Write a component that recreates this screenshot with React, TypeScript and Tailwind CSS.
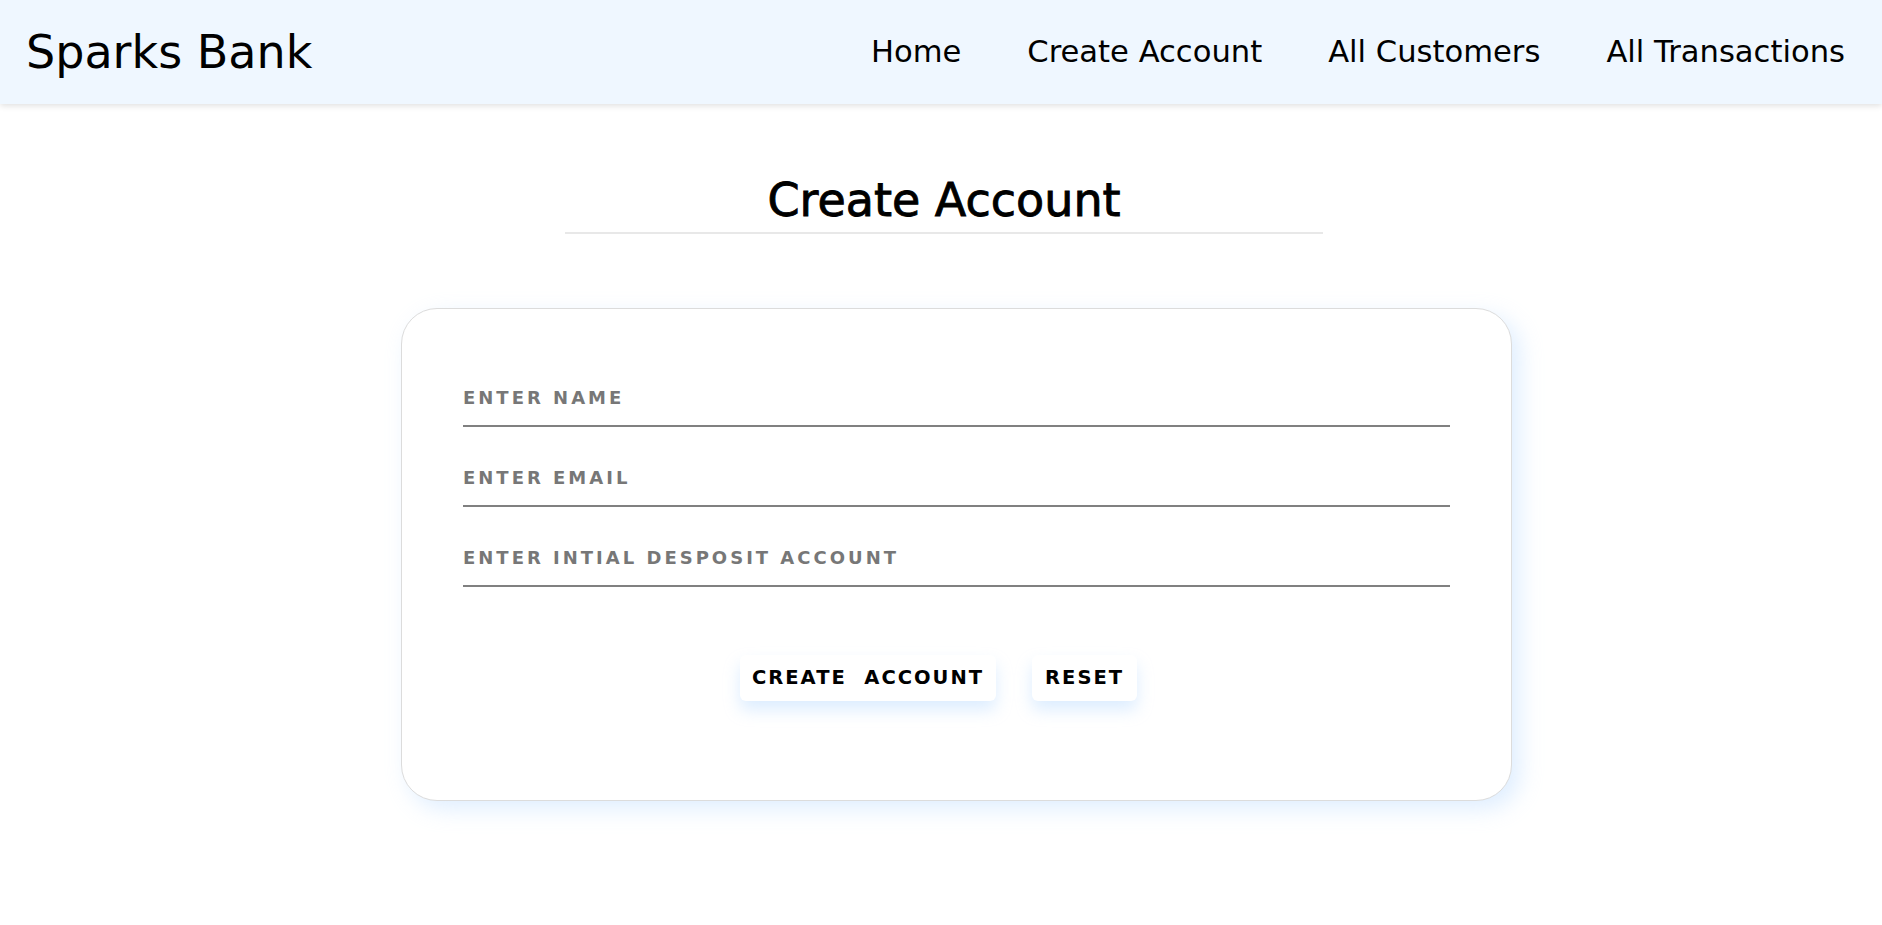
const links = ["Home", "Create Account", "All Customers", "All Transactions"];

const fields = ["Enter Name", "Enter Email", "Enter Intial Desposit Account"];

const Navbar = () => {
  return (
    <nav className="flex h-[104px] items-center justify-between bg-[#eff7ff] pl-[26px] pr-[37px] shadow-[0_2px_6px_rgba(0,0,0,0.12)]">
      <div className="text-[46px] leading-none text-black">Sparks Bank</div>
      <div className="flex items-center gap-[66px]">
        {links.map((link) => (
          <a key={link} href="#" className="text-[30.6px] leading-none text-black">
            {link}
          </a>
        ))}
      </div>
    </nav>
  );
};

const App = () => {
  return (
    <div className="min-h-[925px] bg-white font-['DejaVu_Sans',sans-serif]">
      <Navbar />
      <div className="mt-[73px] flex justify-center pl-[6px]">
        <div className="w-[758px] border-b-2 border-[#e8e8e8] pb-[9px] text-center">
          <h1 className="text-[46px] leading-none text-black [-webkit-text-stroke:0.9px_#000]">
            Create Account
          </h1>
        </div>
      </div>
      <div className="mt-[74px] flex justify-center pl-[31px]">
        <form className="w-[1111px] rounded-[36px] border border-[#dcdcdc] bg-white px-[61px] pt-[60px] pb-[99px] shadow-[8px_8px_22px_rgba(185,218,255,0.45)]">
          <div className="flex flex-col gap-[22px]">
            {fields.map((field) => (
              <input
                key={field}
                placeholder={field.toUpperCase()}
                className="h-[58px] w-full border-b-2 border-[#808080] bg-transparent text-[18px] font-bold tracking-[3px] text-[#555] outline-none placeholder:text-[#777]"
              />
            ))}
          </div>
          <div className="mt-[68px] flex justify-center gap-[36px] pr-[36px]">
            <button
              type="button"
              className="h-[46px] rounded-[6px] bg-white px-[12px] text-[19.5px] font-bold tracking-[2px] text-black shadow-[0_9px_16px_rgba(170,210,255,0.4)]"
            >
              {"CREATE\u00a0 ACCOUNT"}
            </button>
            <button
              type="button"
              className="h-[46px] rounded-[6px] bg-white px-[13px] text-[19.5px] font-bold tracking-[2px] text-black shadow-[0_9px_16px_rgba(170,210,255,0.4)]"
            >
              RESET
            </button>
          </div>
        </form>
      </div>
    </div>
  );
};

export default App;
